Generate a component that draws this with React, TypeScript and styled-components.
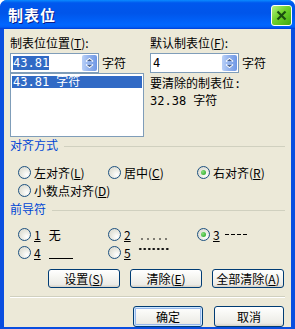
import styled, { createGlobalStyle } from "styled-components";

const GlobalStyle = createGlobalStyle`
  html, body { margin: 0; padding: 0; background: #ffffff; }
  body { font-family: "Noto Sans CJK SC", "DejaVu Sans", sans-serif; font-size: 12px; }
  * { box-sizing: border-box; }
`;

const Window = styled.div`
  width: 295px;
  height: 329px;
  display: flex;
  flex-direction: column;
  background: #0a4ee0;
  border-radius: 7px 7px 0 0;
  overflow: hidden;
`;

const TitleBar = styled.div`
  height: 29px;
  flex: none;
  display: flex;
  align-items: center;
  justify-content: space-between;
  padding: 0 3px 0 8px;
  background: linear-gradient(
    #0a8bff 0%,
    #0058ee 10%,
    #0055ea 45%,
    #0066ff 85%,
    #0060f8 93%,
    #003dd7 100%
  );
`;

const Title = styled.span`
  color: #ffffff;
  font-weight: bold;
  font-size: 15px;
  letter-spacing: 1px;
  line-height: 18px;
  text-shadow: 1px 1px 0 #0a1e8a;
`;

const CloseButton = styled.div`
  width: 21px;
  height: 21px;
  margin-top: 1px;
  border: 1px solid #ffffff;
  border-radius: 3px;
  background-color: #5ec82c;
  background-image: linear-gradient(to bottom right, #b6f280, #6fd22c 45%, #3fa812);
  display: flex;
  align-items: center;
  justify-content: center;
`;

const Client = styled.div`
  flex: 1;
  margin: 0 4px 6px 4px;
  background: #ece9d8;
  padding: 5px 6px 0 6px;
  display: flex;
  flex-direction: column;
  color: #000000;
`;

const TopArea = styled.div`
  display: flex;
  gap: 5px;
`;

const Column = styled.div<{ $width: number }>`
  width: ${(p) => p.$width}px;
  display: flex;
  flex-direction: column;
`;

const Label = styled.div`
  height: 14px;
  line-height: 14px;
  margin-top: 2px;
  white-space: nowrap;
`;

const Key = styled.span`
  text-decoration: underline;
`;

const SpinRow = styled.div`
  display: flex;
  align-items: center;
  gap: 3px;
  margin-top: 3px;
`;

const SpinBox = styled.div`
  width: 89px;
  height: 20px;
  border: 1px solid #7f9db9;
  background: #ffffff;
  display: flex;
  align-items: center;
  padding: 1px;
`;

const SpinText = styled.div`
  flex: 1;
  padding-left: 1px;
  font-family: "DejaVu Sans Mono", monospace;
  font-size: 12px;
  line-height: 14px;
`;

const Selected = styled.span<{ $on: boolean }>`
  background: ${(p) => (p.$on ? "#316ac5" : "transparent")};
  color: ${(p) => (p.$on ? "#ffffff" : "#000000")};
`;

const SpinButtons = styled.div`
  width: 15px;
  height: 16px;
  border-radius: 2px;
  background: linear-gradient(90deg, #b9d0f7 0%, #8fb0ec 50%, #6e97e5 100%);
  display: flex;
  flex-direction: column;
  align-items: center;
  justify-content: space-around;
  padding: 2px 0;
`;

const Unit = styled.span`
  line-height: 14px;
`;

const ListBox = styled.div`
  width: 134px;
  height: 64px;
  border: 1px solid #7f9db9;
  background: #ffffff;
  padding: 2px 1px;
`;

const ListItem = styled.div<{ $selected: boolean }>`
  height: 12px;
  line-height: 12px;
  padding-left: 1px;
  font-family: "DejaVu Sans Mono", "Noto Sans CJK SC", monospace;
  background: ${(p) => (p.$selected ? "#316ac5" : "transparent")};
  color: ${(p) => (p.$selected ? "#ffffff" : "#000000")};
`;

const InfoText = styled.div<{ $top: number }>`
  margin-top: ${(p) => p.$top}px;
  line-height: 14px;
  font-family: "DejaVu Sans Mono", "Noto Sans CJK SC", monospace;
  font-size: 12px;
  white-space: nowrap;
`;

const GroupHeader = styled.div<{ $top: number }>`
  margin-top: ${(p) => p.$top}px;
  display: flex;
  align-items: center;
  gap: 6px;
  color: #0046d5;
  line-height: 14px;
  &::after {
    content: "";
    flex: 1;
    height: 1px;
    background: #d0d0bf;
    margin-top: 2px;
  }
`;

const RadioGrid = styled.div<{ $top: number }>`
  display: grid;
  grid-template-columns: 90px 89px 1fr;
  row-gap: 5px;
  padding-left: 8px;
  margin-top: ${(p) => p.$top}px;
`;

const RadioItem = styled.div`
  display: flex;
  align-items: center;
  gap: 3px;
  height: 13px;
  white-space: nowrap;
`;

const RadioCircle = styled.span<{ $checked: boolean }>`
  width: 13px;
  height: 13px;
  flex: none;
  border-radius: 50%;
  border: 1px solid #1c5180;
  background: radial-gradient(circle at 70% 70%, #ffffff 0%, #e8e8e0 50%, #d6d6cc 100%);
  display: flex;
  align-items: center;
  justify-content: center;
  &::after {
    content: "";
    display: ${(p) => (p.$checked ? "block" : "none")};
    width: 5px;
    height: 5px;
    border-radius: 50%;
    background: radial-gradient(circle at 35% 35%, #86e07a, #21a121);
  }
`;

const RadioLabel = styled.span`
  line-height: 13px;
`;

const NoneText = styled.span`
  margin-left: 8px;
`;

const Leader = styled.span<{ $kind: "dots" | "dash" | "line" | "heavy" }>`
  display: inline-block;
  height: 13px;
  vertical-align: top;
  background-repeat: repeat-x;
  ${(p) =>
    p.$kind === "dots"
      ? "background-image: radial-gradient(circle, #000 0.6px, transparent 0.8px); background-size: 6px 2px; background-position: 0 10px; width: 30px; margin-left: 8px;"
      : p.$kind === "dash"
      ? "background-image: linear-gradient(90deg, #000 4px, transparent 4px); background-size: 6px 1px; background-position: 0 6px; width: 24px; margin-left: 5px;"
      : p.$kind === "line"
      ? "background-image: linear-gradient(#000, #000); background-size: 100% 1px; background-position: 0 12px; width: 24px; margin-left: 8px;"
      : "background-image: radial-gradient(circle, #000 1px, transparent 1.1px); background-size: 4.5px 2px; background-position: 0 2px; width: 31px; margin-left: 7px;"}
`;

const ButtonRow = styled.div<{ $top: number; $gap: number }>`
  margin-top: ${(p) => p.$top}px;
  display: flex;
  justify-content: flex-end;
  gap: ${(p) => p.$gap}px;
  padding-right: 1px;
`;

const Button = styled.div<{ $default?: boolean; $height: number }>`
  width: ${(p) => (p.$height > 19 ? 70 : 72)}px;
  height: ${(p) => p.$height}px;
  border: 1px solid #003c74;
  border-radius: 3px;
  background: linear-gradient(#ffffff 0%, #f6f6f2 40%, #ecebe6 85%, #d6d0c5 100%);
  display: flex;
  align-items: center;
  justify-content: center;
  line-height: 14px;
  box-shadow: ${(p) =>
    p.$default ? "inset 0 0 0 1px #cee7ff, inset 0 0 0 2px #98b8ea" : "none"};
`;

const Separator = styled.div`
  margin-top: 8px;
  height: 2px;
  border-top: 1px solid #d0d0bf;
  border-bottom: 1px solid #ffffff;
`;

const spinIcon = (
  <svg width="9" height="12" viewBox="0 0 9 12">
    <path d="M1 4.5 L4.5 1.5 L8 4.5" fill="none" stroke="#ffffff" strokeWidth="1.3" />
    <path d="M1 7.5 L4.5 10.5 L8 7.5" fill="none" stroke="#ffffff" strokeWidth="1.3" />
    <path d="M2 4 L4.5 2 L7 4Z M2 8 L4.5 10 L7 8Z" fill="#4d6185" />
  </svg>
);

function Spin({ value, highlight }: { value: string; highlight: boolean }) {
  return (
    <SpinRow>
      <SpinBox>
        <SpinText>
          <Selected $on={highlight}>{value}</Selected>
        </SpinText>
        <SpinButtons>{spinIcon}</SpinButtons>
      </SpinBox>
      <Unit>字符</Unit>
    </SpinRow>
  );
}

function Radio({ checked, children }: { checked?: boolean; children: React.ReactNode }) {
  return (
    <RadioItem>
      <RadioCircle $checked={!!checked} />
      <RadioLabel>{children}</RadioLabel>
    </RadioItem>
  );
}

export default function App() {
  return (
    <>
      <GlobalStyle />
      <Window>
        <TitleBar>
          <Title>制表位</Title>
          <CloseButton>
            <svg width="11" height="11" viewBox="0 0 11 11">
              <path d="M1.5 1.5 L9.5 9.5 M9.5 1.5 L1.5 9.5" stroke="#1a4d10" strokeWidth="2.2" />
            </svg>
          </CloseButton>
        </TitleBar>
        <Client>
          <TopArea>
            <Column $width={135}>
              <Label>
                制表位位置(<Key>T</Key>):
              </Label>
              <Spin value="43.81" highlight />
              <ListBox>
                <ListItem $selected>43.81 字符</ListItem>
              </ListBox>
            </Column>
            <Column $width={130}>
              <Label>
                默认制表位(<Key>F</Key>):
              </Label>
              <Spin value="4" highlight={false} />
              <InfoText $top={4}>要清除的制表位:</InfoText>
              <InfoText $top={3}>32.38 字符</InfoText>
            </Column>
          </TopArea>

          <GroupHeader $top={1}>对齐方式</GroupHeader>
          <RadioGrid $top={14}>
            <Radio>
              左对齐(<Key>L</Key>)
            </Radio>
            <Radio>
              居中(<Key>C</Key>)
            </Radio>
            <Radio checked>
              右对齐(<Key>R</Key>)
            </Radio>
            <Radio>
              小数点对齐(<Key>D</Key>)
            </Radio>
          </RadioGrid>

          <GroupHeader $top={5}>前导符</GroupHeader>
          <RadioGrid $top={12}>
            <Radio>
              <Key>1</Key>
              <NoneText>无</NoneText>
            </Radio>
            <Radio>
              <Key>2</Key>
              <Leader $kind="dots" />
            </Radio>
            <Radio checked>
              <Key>3</Key>
              <Leader $kind="dash" />
            </Radio>
            <Radio>
              <Key>4</Key>
              <Leader $kind="line" />
            </Radio>
            <Radio>
              <Key>5</Key>
              <Leader $kind="heavy" />
            </Radio>
          </RadioGrid>

          <ButtonRow $top={10} $gap={10}>
            <Button $height={19}>
              设置(<Key>S</Key>)
            </Button>
            <Button $height={19}>
              清除(<Key>E</Key>)
            </Button>
            <Button $height={19}>
              全部清除(<Key>A</Key>)
            </Button>
          </ButtonRow>
          <Separator />
          <ButtonRow $top={8} $gap={11}>
            <Button $default $height={21}>
              确定
            </Button>
            <Button $height={21}>取消</Button>
          </ButtonRow>
        </Client>
      </Window>
    </>
  );
}
